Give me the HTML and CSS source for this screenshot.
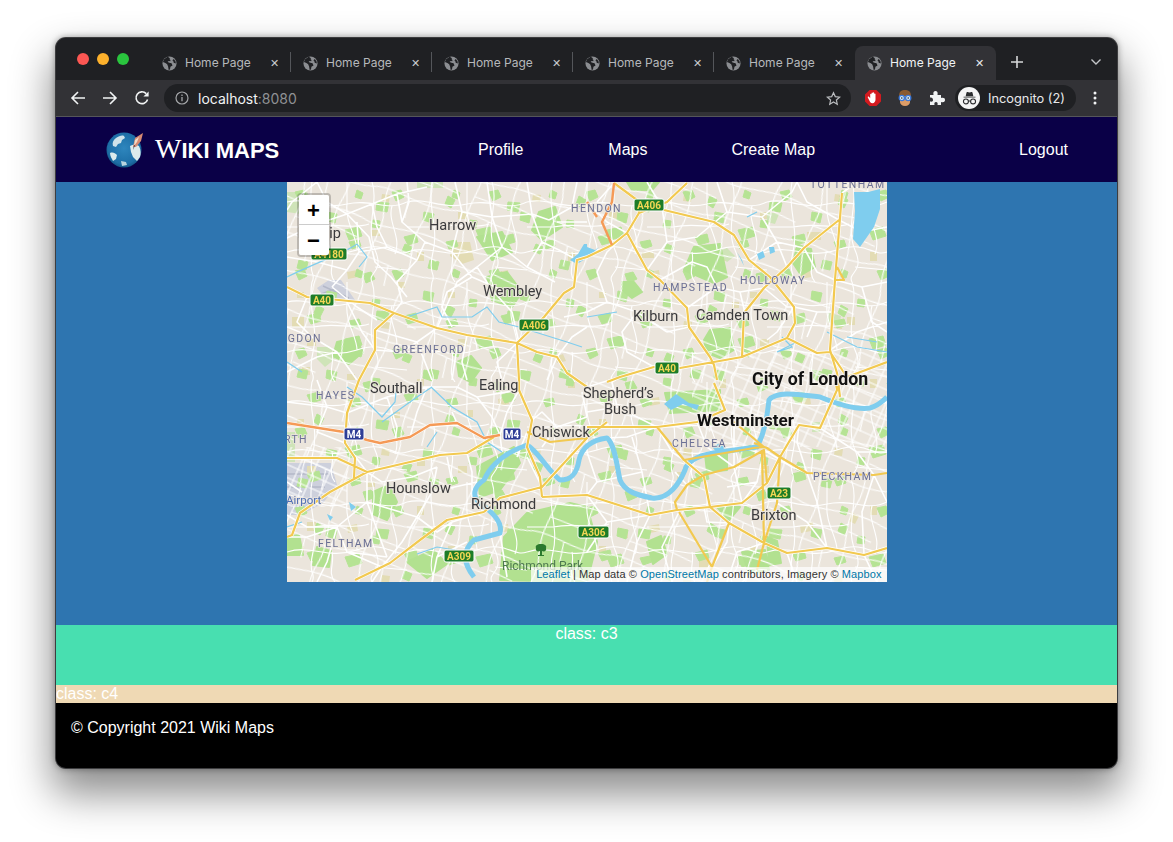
FILE: index.html
```html
<!DOCTYPE html>
<html lang="en">
<head>
<meta charset="utf-8">
<title>Home Page</title>
<link rel="stylesheet" href="styles.css">
</head>
<body>
<svg class="defs" width="0" height="0">
  <symbol id="globe" viewBox="0 0 16 16">
    <circle cx="8" cy="8" r="7.5" fill="#8b8d91"/>
    <path d="M6 .8 2.2 3.4 1 6.5l2.6 1 1.9 1.4 1 2.4.6 3.6 1.4-.4.5-3 2.2-1.5-1-2.2-3.2-.8-1-1.2 1.5-.6 1.2.5.4-1.4-1-.8.3-1.2-1-.6zM12.6 3.2l-1.5 1.2 1 1.3.4 1.6 2.3.7-.4-2.5z" fill="#1f2023"/>
  </symbol>
</svg>
<div class="window">
  <header class="tabstrip">
    <div class="lights"><i class="light red"></i><i class="light amber"></i><i class="light green"></i></div>
    <div class="tabs">
      <div class="tab"><svg class="fav"><use href="#globe"/></svg><span class="tab-title">Home Page</span><span class="tab-x">✕</span></div>
      <div class="tab"><svg class="fav"><use href="#globe"/></svg><span class="tab-title">Home Page</span><span class="tab-x">✕</span></div>
      <div class="tab"><svg class="fav"><use href="#globe"/></svg><span class="tab-title">Home Page</span><span class="tab-x">✕</span></div>
      <div class="tab"><svg class="fav"><use href="#globe"/></svg><span class="tab-title">Home Page</span><span class="tab-x">✕</span></div>
      <div class="tab last"><svg class="fav"><use href="#globe"/></svg><span class="tab-title">Home Page</span><span class="tab-x">✕</span></div>
      <div class="tab active"><svg class="fav"><use href="#globe"/></svg><span class="tab-title">Home Page</span><span class="tab-x">✕</span></div>
    </div>
    <svg class="newtab" width="14" height="14" viewBox="0 0 14 14"><path d="M7 1v12M1 7h12" stroke="#d6d7d9" stroke-width="1.6" fill="none"/></svg>
    <svg class="tabmenu" width="12" height="8" viewBox="0 0 12 8"><path d="M1.5 1.5 6 6l4.5-4.5" stroke="#c4c6c9" stroke-width="1.4" fill="none"/></svg>
  </header>
  <div class="toolbar">
    <svg class="navicon first" width="16" height="16" viewBox="0 0 16 16"><path d="M15 8H2M8 2 2 8l6 6" stroke="#f1f3f4" stroke-width="1.6" fill="none"/></svg>
    <svg class="navicon" width="16" height="16" viewBox="0 0 16 16"><path d="M1 8h13M8 2l6 6-6 6" stroke="#f1f3f4" stroke-width="1.6" fill="none"/></svg>
    <svg class="navicon" width="16" height="16" viewBox="0 0 16 16"><path d="M13.6 9.5A5.9 5.9 0 1 1 12.2 3.6" stroke="#f1f3f4" stroke-width="1.6" fill="none"/><path d="M14.6 1.4v5.2H9.4z" fill="#f1f3f4"/></svg>
    <div class="omnibox">
      <svg class="info" width="14" height="14" viewBox="0 0 14 14"><circle cx="7" cy="7" r="6" stroke="#a4a6a9" stroke-width="1.2" fill="none"/><path d="M7 6v4.2M7 3.6v1.3" stroke="#a4a6a9" stroke-width="1.3"/></svg>
      <span class="url">localhost<span class="port">:8080</span></span>
      <svg class="star" width="15" height="15" viewBox="0 0 16 16"><path d="m8 1.8 1.9 4.2 4.6.5-3.4 3.1.9 4.5L8 11.8l-4 2.3.9-4.5-3.4-3.1 4.6-.5z" stroke="#b9bbbe" stroke-width="1.3" fill="none"/></svg>
    </div>
    <svg class="ext stop" width="18" height="18" viewBox="0 0 18 18"><path d="M5.6 1h6.8L17 5.6v6.8L12.4 17H5.6L1 12.4V5.6z" fill="#d31a1f"/><path d="M6.2 5.5c0-1 1.2-1 1.3 0V4.2c0-1 1.4-1 1.4 0v-.3c0-.9 1.3-.9 1.3 0v1.2c0-.9 1.3-.9 1.3 0v5.4c0 2-1.2 3.7-3 3.7-1.7 0-2.4-1-3.3-3L3.8 8.5c-.4-.9.7-1.5 1.2-.7l1.2 1.5z" fill="#fff"/></svg>
    <svg class="ext face" width="16" height="18" viewBox="0 0 16 18"><path d="M2 8C1.5 2 5 1 8 1s6.500 1 6 7l-1 4H3z" fill="#8a5a30"/><path d="M3 7h10v6c0 2-2 4-5 4s-5-2-5-4z" fill="#dd9c66"/><circle cx="4.800" cy="9" r="2.600" fill="#d7ecf8" stroke="#3b78d8" stroke-width="1.300"/><circle cx="11.200" cy="9" r="2.600" fill="#d7ecf8" stroke="#3b78d8" stroke-width="1.300"/><circle cx="4.800" cy="9" r=".8" fill="#223"/><circle cx="11.200" cy="9" r=".8" fill="#223"/></svg>
    <svg class="ext puzzle" width="16" height="16" viewBox="0 0 16 16"><path d="M1 5h3.500c-.6-3 .4-4 2-4s2.600 1 2 4H12v3c3-.6 4 .4 4 2s-1 2.600-4 2v3H8.500c.5-2.200-.2-3-1.500-3s-2 .8-1.500 3H1v-3.500c2.200.5 3-.2 3-1.500S3.200 7 1 7.500z" fill="#f1f3f4"/></svg>
    <div class="profile">
      <span class="avatar"><svg width="20" height="16" viewBox="0 0 20 16"><path d="M3 6.500h14v1H3zM5.500 6l1-4.500c.1-.6.600-.8 1.100-.6l2.400.7 2.400-.7c.5-.2 1 0 1.100.6l1 4.500z" fill="#2b2c2f"/><circle cx="5.800" cy="12" r="2.900" fill="none" stroke="#2b2c2f" stroke-width="1.300"/><circle cx="14.200" cy="12" r="2.900" fill="none" stroke="#2b2c2f" stroke-width="1.300"/><path d="M8.600 11.500h2.800" stroke="#2b2c2f" stroke-width="1.200"/></svg></span>
      <span class="profile-name">Incognito (2)</span>
    </div>
    <svg class="kebab" width="4" height="14" viewBox="0 0 4 14"><circle cx="2" cy="2" r="1.500" fill="#f1f3f4"/><circle cx="2" cy="7" r="1.500" fill="#f1f3f4"/><circle cx="2" cy="12" r="1.500" fill="#f1f3f4"/></svg>
  </div>

  <div class="page">
    <nav class="sitenav">
      <a class="brand">
        <svg class="globe" width="38" height="36" viewBox="0 0 38 36">
          <defs><radialGradient id="sea" cx=".5" cy=".45" r=".6"><stop offset="0" stop-color="#2e86bd"/><stop offset=".75" stop-color="#1d6ea6"/><stop offset="1" stop-color="#0f4a78"/></radialGradient></defs>
          <circle cx="18" cy="18" r="17.500" fill="url(#sea)"/>
          <path d="M10 6c3-2 6-3 8-2l1 2-3 2-1 3-3 1-2 3-3-1c-1-3 0-6 3-8z" fill="#cfe3ea"/>
          <path d="M4 21c3-1 5 0 7 2l-1 4-3 2c-1-2-3-5-3-8zM24 14c3-2 6-2 9 0 2 4 2 8 1 11l-3 4-4-4-2-5z" fill="#dcebec"/>
          <path d="M15 29l5 1 1 3-5 1z" fill="#b9d4de"/>
          <path d="M27 15 29 6l8-5-2 8-5 6z" fill="#d88a72"/>
          <path d="M28 14l1-6 4-3-2 5z" fill="#f1dcc8"/>
          <path d="M27 18l1-5 1 .5z" fill="#334"/>
        </svg>
        <span class="wordmark"><span class="wordmark-w">W</span>IKI MAPS</span>
      </a>
      <a class="navlink">Profile</a>
      <a class="navlink">Maps</a>
      <a class="navlink">Create Map</a>
      <a class="navlink logout">Logout</a>
    </nav>

    <main class="hero">
      <div class="map">
        <svg class="tiles" width="600" height="400" viewBox="0 0 600 400">
          <defs>
            <pattern id="st1" width="120" height="100" patternUnits="userSpaceOnUse"><path class="pat-st" d="M0 20C20 15 35 28 60 22S100 30 120 20M0 70C25 62 40 78 70 68S105 75 120 70M25 0C20 25 32 45 26 70S30 90 25 100M85 0C92 20 78 45 88 68S80 90 85 100M60 22C58 40 70 55 70 68M26 45C50 40 65 48 82 42M105 24C100 40 115 55 108 72M45 70C48 82 40 90 48 100M0 45 26 45M88 85 120 88M60 0 60 22"/></pattern>
            <pattern id="st2" width="83" height="71" patternUnits="userSpaceOnUse" patternTransform="rotate(17)"><path class="pat-st" d="M0 12C20 20 50 5 83 12M0 50C20 42 50 58 83 50M18 0C25 20 10 40 18 71M58 0C50 25 65 45 58 71M18 30 58 33M58 28 83 32M38 50 40 71"/></pattern>
            <pattern id="st3" width="15" height="12" patternUnits="userSpaceOnUse" patternTransform="rotate(24)"><path class="pat-st" d="M0 6h15M7 0v12"/></pattern>
            <pattern id="gr1" width="97" height="79" patternUnits="userSpaceOnUse"><path class="pat-gr" d="M8 10l9-2 3 7-8 4zM40 30l10 2-2 9-9-3zM70 8l6 3-2 6-6-2zM20 55l12-3 2 8-10 3zM62 60l10-2 2 6-9 3zM86 38l7 1-1 7-7-1z"/></pattern>
            <pattern id="gr2" width="131" height="109" patternUnits="userSpaceOnUse"><path class="pat-gr" d="M30 14l7 4-4 8-6-4zM90 20l12 1-2 9-11-2zM118 62l7 3-3 7-7-3zM58 48l14-3 3 9-13 4zM12 78l9 2-2 8-9-2zM76 92l8-2 4 7-9 4z"/></pattern>
            <pattern id="tn1" width="151" height="127" patternUnits="userSpaceOnUse"><path class="pat-tn" d="M20 30h9v7h-9zM95 12l8 1-1 7-8-1zM130 70h7v9h-7zM60 90l10-2 1 7-10 2zM10 110h7v6h-7z"/></pattern>
          </defs>
          <rect class="land" width="600" height="400"/>
          <path class="airfield" d="M0 281h44l6 22-14 18-22 12H0zM30 106l12-8h12l14 20H40z"/>
          <path class="runway" d="M0 292h42M0 305h38M0 318h24M36 104l26 12M34 112l14-5"/>
          <path class="tan" d="M165 60h18l4 18-12 4-12-8zM85 48h8v6h-8zM5 135h12v10H5zM110 100h8v6h-8zM268 175l8-3 3 7-9 2zM15 185h8v8h-8zM60 192h8v6h-8zM355 70h12v6h-12zM425 75l10 3-3 8-7-3zM445 120h7v6h-7zM520 50h14v8h-14zM560 135h8v8h-8zM480 130h6v6h-6zM105 230h8v6h-8zM180 228h6v7h-6zM20 340h9v9h-9zM80 300h8v5h-8zM130 278h8v6h-8zM240 340h14v6h-14zM270 330h10v5h-10zM390 290h7v7h-7zM520 340h6v8h-6zM564 330l8 4-4 8-6-3zM412 376h10v10h-10zM335 348h6v8h-6z"/>
          <rect class="fill-tn" width="600" height="400"/>
          <path class="pale" d="M0 10h20l8 14-14 8-14-2zM130 0h26v6h-26zM0 250h8v30H0zM430 70l10-4 8 8-8 6zM480 30l12 2-4 10-8-2zM540 130l14 4-2 10-12-4zM525 240h8v10h-8zM30 165h14l4 12-10 8-8-8z"/>
          <rect class="fill-gr1" width="600" height="400"/>
          <rect class="fill-gr2" width="600" height="400"/>
          <path class="park large" d="M213 398 217 355 240 331 283 321 300 325 310 360 300 400ZM397 88 407 65 433 62 440 95 427 101 413 95ZM417 158 423 148 443 146 447 168 433 176 420 171ZM378 211 433 208 433 228 383 231ZM190 285 227 265 233 281 213 308 193 315ZM418 272 440 270 440 288 420 290ZM430 325 453 325 442 338ZM86 310 102 303 110 320 100 338 86 332ZM200 95 220 90 235 110 225 125 205 118ZM455 370 478 368 482 388 462 392ZM340 0 372 0 365 8 345 8ZM190 55 215 50 225 70 205 78ZM335 100h12l8 10-10 6-10-8zM252 30 268 25 275 45 255 58 245 48ZM510 65l14 2 4 18-14 8-8-12zM50 160l18-4 8 14-14 12-16-8zM170 180l14-6 10 12-10 14-12-6zM120 380l26-12 14 14-20 14zM0 355l12-2 4 20H0zM30 365l14 4-2 16-16-2zM360 360l14-6 6 18-14 10zM480 355l10 4 4 22-12 2z"/>
          <rect class="fill-st1" width="600" height="400"/>
          <rect class="fill-st2" width="600" height="400"/>
          <path class="fill-st3" d="M405 170h195v95H440l-35-30zM0 265h60v60H0z"/>
          <g class="streets">
            <path d="M30 0 40 20 60 32 82 55 88 80 104 95 120 115M0 56 30 42 60 32M60 32 85 22 110 12 140 5M110 12 115 40 138 60 130 78 110 100 115 120 105 133M138 60 165 70 185 95 215 108M165 70 175 30 168 0M175 30 205 35 245 32 262 38M205 35 215 65 240 85 268 100M215 65 190 85 170 100 150 146M245 32 255 60 272 68 290 78M255 60 240 85M120 0 122 20 115 40M70 40 72 70 60 88 45 105M72 70 100 65 130 78M45 105 70 125 90 138M0 75 30 80 60 88M30 0 5 20 0 28M200 0 205 35M240 0 245 32M290 0 285 25 262 38M190 85 205 108 225 130 232 161M185 95 160 110 155 125 165 145M100 65 90 45 85 22"/>
            <path d="M300 20 320 40 340 51M300 40 270 40M327 1 310 20M360 0 375 25 380 60 360 88M380 60 410 55 440 30M440 30 430 0M440 30 475 35 505 10 510 0M475 35 490 60 517 66M490 60 462 78M400 126 430 105 453 110 477 106M430 105 420 85 405 80 373 98M340 51 320 70 310 90 320 120 350 130 380 150M320 120 300 130 277 135M350 130 335 150 340 170 367 185M380 150 402 145M453 110 458 131M477 106 500 125 507 125 530 130 548 130M517 66 530 90 548 98 575 105 600 100M555 11 570 0M552 38 575 50 600 45M530 130 520 155M507 125 490 150 480 158M575 105 585 140 600 150M543 168 570 150 600 140M500 85 490 60M510 0 520 20 552 38"/>
            <path d="M0 190 30 175 50 170 70 198M0 145 25 155 50 170M88 148 130 160 150 146M88 168 115 170 130 160 145 198M170 165 165 198M60 120 75 150 88 168M20 115 10 140 25 155M180 153 175 180 180 198M230 161 210 180 215 198M270 175 285 155 300 145M260 198 270 175"/>
            <path d="M0 220 40 225 60 231M60 231 100 215 140 205 170 205 190 215 232 208M140 205 130 230 123 255M190 215 205 235 213 253M100 215 110 245 108 259M30 198 40 225 30 250 58 261M58 261 80 290M80 290 95 300 125 295 150 285M150 285 145 310 130 335 115 360 95 385 85 400M145 310 190 300M130 335 80 320 50 345 20 355 0 355M80 320 80 290M80 320 100 375M50 345 40 380 30 400M130 335 150 350 165 340 197 330M165 340 150 375 145 400M0 300 15 310M160 275 165 300M180 271 185 290 185 320 197 330M213 253 215 270M170 241 165 230M232 208 220 230 213 253M240 250 230 275M255 265 270 245 300 235M300 235 295 210M270 245 255 230 245 238M255 305 240 275M60 370 100 375M95 385 60 370 50 345M220 395 213 351M180 360 150 375M0 333 20 345 50 345"/>
            <path d="M300 230 330 225 370 245M330 225 325 200 333 195M300 205 333 195M370 245 385 270 397 278M370 245 340 255 320 256M345 255 355 290 363 333M355 290 310 300 300 313M310 300 300 270 300 245M400 303 388 290M410 240 420 265 447 285 455 321M447 285 447 240M477 268 470 300 455 321M477 268 505 285 520 291M520 291 530 320 540 366M520 291 510 260 512 243M533 246 570 270 600 270M570 270 587 293 575 330 577 373M587 293 600 320M540 366 520 340 490 321M363 333 350 360 340 400M392 330 375 365 385 400M425 385 440 360 442 341M477 361 450 370 440 400M500 371 510 400M577 373 590 400M477 361 490 321M363 333 320 340 300 370M300 313 320 340M440 305 470 300M417 325 420 340 442 341M470 388 455 400"/>
          </g>
          <path class="water" d="M567 10h14l12-3v20l-6 18-14 20-7-8 2-28zM283 78l8-6 6-10 3 0v14l-10 6zM300 65l8 3 4-3-7 7-5 1zM377 222l12-10 13 9 10 2-2 5-14-6-12 6zM425 265l10-5 4 5-8 6zM470 72l6-3 2 6-6 3zM482 65l5 0 1 5-5 2zM62 320l7 5-5 4zM450 70l5 8 2 6zM40 332l6 3-3 4z"/>
          <path class="river" d="M187 395C175 380 176 368 187 358L213 351C216 340 205 330 193 321 185 315 186 305 197 298 205 280 220 270 240 263 250 268 262 290 273 298 285 298 290 291 292 278 295 265 305 258 320 256 328 262 330 285 333 298 338 310 350 313 365 316 382 318 393 300 398 288 400 278 415 272 433 270L470 265C478 250 480 235 482 218 490 208 515 213 533 215 550 222 570 228 583 226 590 224 595 220 600 215"/>
          <path class="stream" d="M0 95C30 80 60 70 70 62M70 62 80 75 72 85M120 135 150 125 155 135 185 135 200 125 212 140 232 145 280 160 295 165M110 200 108 220 95 235 75 215 60 205M0 180 15 190M95 240 130 215 145 205M144 205 165 225 190 240 200 260 215 270M150 250 140 265M0 345 15 340M180 370 150 365 130 372M300 135 330 130M540 150 570 165 600 170M495 155 505 165 490 170 510 160M460 35 470 30M560 155 590 160"/>
          <path class="casing" d="M0 105 20 115 83 121 107 131 150 146 180 153 230 161 250 170 270 175 280 191 290 198 300 205M107 131 88 148 88 168 72 198 60 231 58 261 68 276 67 296M230 161 232 198 232 208 245 238 240 265 253 295 255 315M230 161 257 135 277 111 287 105 290 78 300 75 325 63 340 51 352 31 350 18 327 1M350 18 377 28 427 40 447 53 462 78 483 95 507 125 508 141 500 156M400 1 380 20 352 31M340 51 360 88 373 98 400 126 402 145 423 175 427 183 430 198M552 38 517 66 500 85 477 106 457 131 455 175M555 11 548 98 543 168 550 191 553 215M320 200 333 195 367 185 393 186 455 175 500 156 530 171 543 170 560 195 600 180M0 276 50 276 80 290 153 273 180 271 207 255M80 290 43 310 13 331 5 353 0 355M197 330 160 338 133 358 103 381 68 398M197 330 213 316 255 305 300 256 320 240M255 315 300 313 363 333 390 328 423 325 455 321 480 301 493 275 512 243 533 246 550 208 548 195M300 245 370 245 410 240 438 228 427 201M397 278 417 295 423 325 442 341 477 361 500 371 540 366 577 373 600 366M0 241 57 250 80 258 93 261 123 255 143 243 170 241 197 256 213 253"/>
          <path class="a-road" d="M0 105 20 115 83 121 107 131 150 146 180 153 230 161 250 170 270 175 280 191 290 198 300 205M107 131 88 148 88 168 72 198 60 231 58 261 68 276 67 296M230 161 232 198 232 208 245 238 240 265 253 295 255 315M230 161 257 135 277 111 287 105 290 78 300 75 325 63 340 51 352 31 350 18 327 1M350 18 377 28 427 40 447 53 462 78 483 95 507 125 508 141 500 156M400 1 380 20 352 31M340 51 360 88 373 98 400 126 402 145 423 175 427 183 430 198M552 38 517 66 500 85 477 106 457 131 455 175M555 11 548 98 543 168 550 191 553 215M550 85 557 98 548 98M320 200 333 195 367 185 393 186 455 175 500 156 530 171 543 170 560 195 600 180M0 276 50 276 80 290 153 273 180 271 207 255M80 290 43 310 13 331 5 353 0 355M197 330 160 338 133 358 103 381 68 398M197 330 213 316 255 305 300 256 320 240M240 250 263 260 300 256M255 315 300 313 363 333 390 328 423 325 455 321 480 301 493 275 512 243 533 246 550 208 548 195M300 245 370 245 410 240 438 228 427 201M370 245 397 278 467 266 477 265 447 240M397 278 417 295 423 325 442 341 477 361 500 371 540 366 577 373 600 366M417 293 400 303 388 320 390 328M417 293 447 285 477 268 480 301M493 275 520 291 587 293 600 291M493 275 490 321 477 361 470 388M442 341 425 385 420 400M392 330 425 385M512 243 493 275 480 266 467 261M477 361 475 268"/>
          <path class="m-road" d="M0 241 57 250 80 258 93 261 123 255 143 243 170 241 197 256 213 253M327 1 325 20 315 40 325 63M300 20 310 35"/>
          <g class="label place">
            <text x="142" y="48">Harrow</text><text x="196" y="114">Wembley</text><text x="54" y="56" text-anchor="end">Ruislip</text>
            <text x="346" y="139">Kilburn</text><text x="409" y="138">Camden Town</text><text x="296" y="216">Shepherd’s</text><text x="317" y="232">Bush</text>
            <text x="83" y="211">Southall</text><text x="192" y="208">Ealing</text><text x="245" y="255">Chiswick</text><text x="464" y="338">Brixton</text><text x="99" y="311">Hounslow</text><text x="184" y="327">Richmond</text>
          </g>
          <g class="label major"><text class="city" x="465" y="203">City of London</text><text x="410" y="244">Westminster</text></g>
          <g class="label area">
            <text x="35" y="160" text-anchor="end">HILLINGDON</text><text x="106" y="171">GREENFORD</text><text x="284" y="30">HENDON</text><text x="523" y="6">TOTTENHAM</text><text x="453" y="102">HOLLOWAY</text><text x="366" y="109">HAMPSTEAD</text>
            <text x="29" y="217">HAYES</text><text x="21" y="261" text-anchor="end">NORTH</text><text x="385" y="265">CHELSEA</text><text x="526" y="298">PECKHAM</text><text x="31" y="365">FELTHAM</text>
          </g>
          <text class="label airport" x="-1" y="322">Airport</text>
          <text class="label parkname" x="215" y="388">Richmond Park</text>
          <path class="tree" d="M254 362c4 0 6 2 5 4 1 3-2 4-4 3v4h2v1h-6v-1h2v-4c-2 1-5 0-4-3-1-2 1-4 5-4z"/>
          <g class="shield-a"><rect x="24" y="66" width="36" height="12" rx="2"/><rect x="23" y="112" width="24" height="12" rx="2"/><rect x="232" y="137" width="30" height="12" rx="2"/><rect x="347" y="17" width="30" height="12" rx="2"/><rect x="368" y="180" width="24" height="12" rx="2"/><rect x="480" y="305" width="24" height="12" rx="2"/><rect x="291" y="344" width="31" height="12" rx="2"/><rect x="157" y="368" width="30" height="12" rx="2"/></g>
          <g class="shield-m"><rect x="57" y="246" width="20" height="12" rx="2"/><rect x="216" y="246" width="18" height="12" rx="2"/></g>
          <g class="shield-text">
            <text x="42" y="75.500">A4180</text><text x="35" y="121.500">A40</text><text x="247" y="146.500">A406</text><text x="362" y="26.500">A406</text><text x="380" y="189.500">A40</text><text x="492" y="314.500">A23</text><text x="306.500" y="353.500">A306</text><text x="172" y="377.500">A309</text>
          </g>
          <g class="shield-text white"><text x="67" y="255.500">M4</text><text x="225" y="255.500">M4</text></g>
        </svg>
        <div class="zoom">
          <a class="zoom-btn">+</a>
          <a class="zoom-btn">−</a>
        </div>
        <div class="attribution"><a>Leaflet</a> | Map data © <a>OpenStreetMap</a> contributors, Imagery © <a>Mapbox</a></div>
      </div>
    </main>
    <section class="c3">class: c3</section>
    <section class="c4">class: c4</section>
    <footer class="sitefoot">© Copyright 2021 Wiki Maps</footer>
  </div>
</div>
</body>
</html>
```

FILE: styles.css
```css
* { box-sizing: border-box; }
html, body { margin: 0; height: 100%; }
body {
  background: #fff;
  padding: 38px 56px 0;
  font-family: "Liberation Sans", Arial, sans-serif;
  overflow: hidden;
}
.defs { display: block; height: 0; }
.window {
  width: 1061px;
  height: 730px;
  border-radius: 10px;
  overflow: hidden;
  display: flex;
  flex-direction: column;
  box-shadow: 0 0 0 1px #3d3d3f, 0 0 6px 1px rgba(0,0,0,.35), 0 22px 40px 4px rgba(0,0,0,.45);
  background: #1f2023;
}
/* tab strip */
.tabstrip { height: 42px; background: #1f2023; display: flex; align-items: flex-end; flex: none; position: relative; }
.lights { width: 94px; height: 42px; flex: none; display: flex; gap: 8px; padding: 15px 0 0 21px; }
.light { width: 12px; height: 12px; border-radius: 50%; display: block; }
.red { background: #fc5753; }
.amber { background: #fdb12c; }
.green { background: #2ac53e; }
.tabs { display: flex; height: 34px; }
.tab {
  width: 141px;
  height: 34px;
  display: flex;
  align-items: center;
  padding: 0 12px 0 12px;
  color: #b6b8bb;
  font: 12px/16px Inter, "Noto Sans", sans-serif;
  position: relative;
}
.tab::after { content: ""; position: absolute; right: 0; top: 6px; height: 20px; width: 1px; background: #54565a; }
.tab.last::after, .tab.active::after { display: none; }
.tab.active { background: #323236; color: #f1f3f4; border-radius: 8px 8px 0 0; }
.fav { width: 15px; height: 15px; flex: none; margin-right: 8px; }
.tab-title { flex: 1; white-space: nowrap; }
.tab-x { font-size: 11px; color: #c9cbce; line-height: 14px; }
.tab.active .tab-x { color: #e8e9eb; }
.newtab { margin: 0 0 11px 14px; }
.tabmenu { margin: 0 0 14px 66px; }
/* toolbar */
.toolbar {
  height: 37px;
  flex: none;
  background: #323236;
  border-bottom: 1px solid #55565a;
  display: flex;
  align-items: center;
}
.navicon { margin-left: 16px; flex: none; }
.navicon.first { margin-left: 14px; }
.omnibox {
  margin-left: 14px;
  width: 687px;
  height: 28px;
  flex: none;
  background: #1f2023;
  border-radius: 14px;
  display: flex;
  align-items: center;
  padding: 0 10px 0 11px;
}
.info { flex: none; }
.url { margin: 1px 0 0 9px; flex: 1; color: #f1f3f4; font: 14px/18px Inter, "Noto Sans", sans-serif; }
.port { color: #8f9194; }
.ext { flex: none; }
.stop { margin-left: 13px; }
.face { margin-left: 15px; }
.puzzle { margin-left: 16px; }
.profile {
  margin-left: 10px;
  width: 121px;
  height: 26px;
  flex: none;
  border-radius: 13px;
  background: #1f2023;
  display: flex;
  align-items: center;
  padding-left: 3px;
}
.avatar { width: 22px; height: 22px; border-radius: 50%; background: #f4f4f5; display: flex; align-items: center; justify-content: center; flex: none; }
.avatar svg { width: 17px; height: 14px; }
.profile-name { margin: 1px 0 0 8px; color: #e8e9eb; font: 12.8px/16px Inter, "Noto Sans", sans-serif; white-space: nowrap; }
.kebab { margin-left: 17px; flex: none; }
/* page */
.page { flex: 1; display: flex; flex-direction: column; color: #fff; min-height: 0; }
.sitenav { height: 65px; flex: none; background: #0a0047; display: flex; align-items: center; padding: 0 49px 0 50px; font-size: 16px; }
.brand { display: flex; align-items: center; width: 372px; flex: none; }
.globe { flex: none; margin-top: 1px; }
.wordmark { margin-left: 11px; font-weight: 700; font-size: 22px; line-height: 24px; white-space: nowrap; }
.wordmark-w { font: 400 28px/24px "Liberation Serif", serif; }
.navlink { color: #fff; margin-right: 85px; }
.navlink:nth-of-type(3) { margin-right: 84px; }
.navlink.logout { margin: 0 0 0 auto; }
.hero { height: 443px; flex: none; background: #2e75b0; display: flex; justify-content: center; }
.map { width: 600px; height: 400px; position: relative; overflow: hidden; flex: none; }
.tiles { display: block; filter: blur(.35px); }
.land { fill: #ebe5dc; }
.airfield { fill: #cdd0dc; }
.runway { fill: none; stroke: #b4b8c8; stroke-width: 1.500; }
.tan, .pat-tn { fill: #e3dcb4; }
.pale { fill: #cfe4b8; }
.pat-gr { fill: #b6e394; stroke: #b6e394; stroke-width: 1; stroke-linejoin: round; }
.pat-st { fill: none; stroke: #fff; stroke-width: 1.100; }
.fill-tn { fill: url(#tn1); }
.fill-gr1 { fill: url(#gr1); }
.fill-gr2 { fill: url(#gr2); }
.fill-st1 { fill: url(#st1); }
.fill-st2 { fill: url(#st2); }
.fill-st3 { fill: url(#st3); }
.park { fill: #b2e190; stroke: #b2e190; stroke-width: 2; stroke-linejoin: round; }
.streets path { fill: none; stroke: #fff; stroke-width: 1.600; stroke-linejoin: round; }
.water { fill: #7fcdee; }
.river { fill: none; stroke: #7fcdee; stroke-width: 5; stroke-linejoin: round; }
.stream { fill: none; stroke: #7fcdee; stroke-width: 1.200; }
.casing { fill: none; stroke: #fff; stroke-width: 3.400; stroke-linejoin: round; }
.a-road { fill: none; stroke: #f2c950; stroke-width: 2.200; stroke-linejoin: round; }
.m-road { fill: none; stroke: #f59a56; stroke-width: 2.400; stroke-linejoin: round; }
.label { font-family: Roboto, "Noto Sans", sans-serif; }
.place text { font-size: 14.500px; fill: #3a3a3c; stroke: #ebe5dc; stroke-width: 2px; paint-order: stroke; }
.major text { font-size: 17px; font-weight: 700; fill: #111; stroke: #f4f0ea; stroke-width: 2px; paint-order: stroke; }
.major .city { font-size: 17.8px; }
.area text { font-size: 10.500px; letter-spacing: 1.400px; fill: #6b7095; stroke: #ebe5dc; stroke-width: 1.500px; paint-order: stroke; }
.airport { font-size: 11.500px; fill: #4f6fb5; stroke: #ebe5dc; stroke-width: 1.500px; paint-order: stroke; }
.parkname { font-size: 12px; fill: #4e7a50; }
.tree { fill: #2b7a2e; }
.shield-a rect { fill: #1e7c28; stroke: #fff; stroke-width: 1; }
.shield-m rect { fill: #2e3d96; stroke: #fff; stroke-width: 1; }
.shield-text text { font: 700 10px Roboto, sans-serif; fill: #f1d655; text-anchor: middle; }
.shield-text.white text { fill: #fff; }
.zoom {
  position: absolute;
  left: 10px;
  top: 11px;
  width: 34px;
  border: 2px solid rgba(0,0,0,.2);
  border-radius: 4px;
  background-clip: padding-box;
}
.zoom-btn {
  display: block;
  width: 30px;
  height: 30px;
  background: #fff;
  color: #000;
  text-align: center;
  font: 700 22px/31px "Liberation Sans", sans-serif;
}
.zoom-btn:first-child { border-bottom: 1px solid #ccc; border-radius: 2px 2px 0 0; }
.zoom-btn:last-child { border-radius: 0 0 2px 2px; }
.attribution {
  position: absolute;
  right: 0;
  bottom: 0;
  background: rgba(255,255,255,.7);
  color: #333;
  font-size: 11px;
  line-height: 15px;
  letter-spacing: .09px;
  padding: 0 5px;
  white-space: nowrap;
}
.attribution a { color: #0078a8; }
.c3 { height: 60px; flex: none; background: #48dfb0; text-align: center; font-size: 16px; line-height: 18px; }
.c4 { height: 18px; flex: none; background: #efd9b4; font-size: 16px; line-height: 18px; }
.sitefoot { flex: 1; background: #000; padding: 16px 15px; font-size: 16px; line-height: 18px; }
```
